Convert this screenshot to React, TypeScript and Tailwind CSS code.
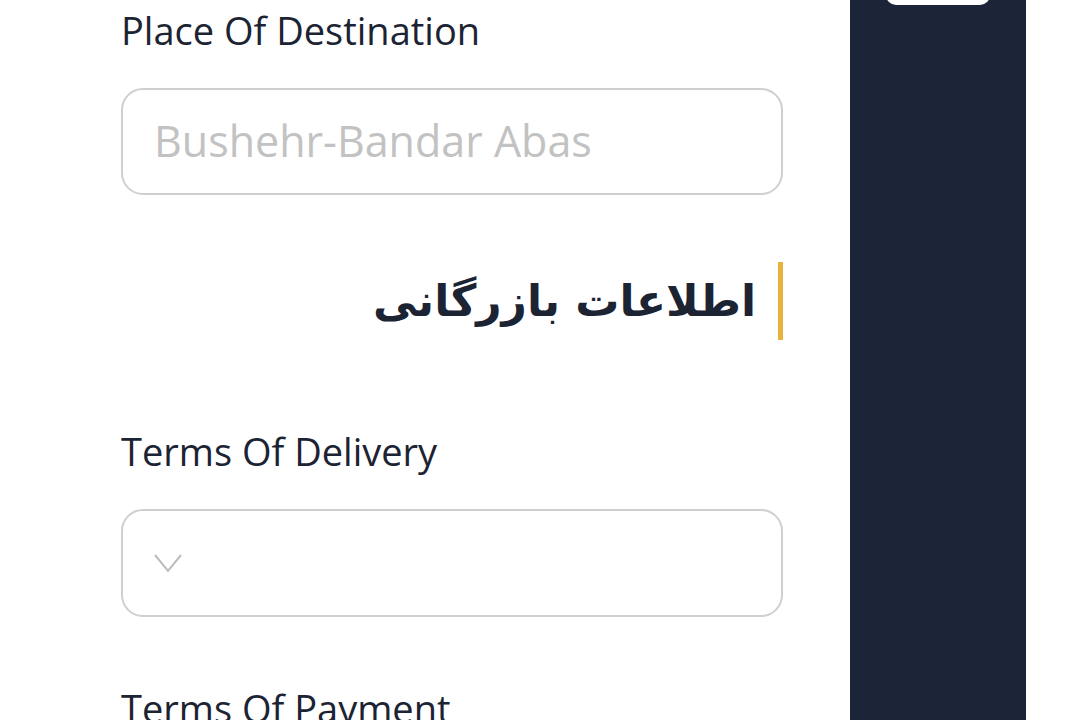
import React from "react";

export default function App() {
  return (
    <div className="flex h-[720px] w-[1080px] overflow-hidden bg-white" style={{ fontFamily: '"Open Sans", "Noto Sans", sans-serif' }}>
      <div className="w-[850px] shrink-0 pl-[121px]">
        <div className="w-[662px]">
          <div className="mt-[4px] text-[38px] leading-[52px] text-[#1c2333]">Place Of Destination</div>
          <div className="mt-[32px] flex h-[107px] items-center rounded-[22px] border-2 border-[#cfcfcf] px-[31px] text-[43px] text-[#c2c2c2]">
            Bushehr-Bandar Abas
          </div>
          <div className="mt-[67px] flex h-[78px] items-center justify-end">
            <div
              dir="rtl"
              className="border-r-[5px] border-[#e8b33a] pr-[22px] text-[44px] font-bold leading-[78px] text-[#1c2333]"
              style={{ fontFamily: '"DejaVu Sans", sans-serif' }}
            >
              اطلاعات بازرگانی
            </div>
          </div>
          <div className="mt-[85px] text-[38px] leading-[52px] text-[#1c2333]">Terms Of Delivery</div>
          <div className="mt-[32px] flex h-[108px] items-center rounded-[22px] border-2 border-[#cfcfcf] px-[30px]">
            <svg width="30" height="24" viewBox="0 0 30 24" fill="none" stroke="#bdbdbd" strokeWidth="2">
              <path d="M2 4 L15 20 L28 4" />
            </svg>
          </div>
          <div className="mt-[65px] text-[38px] leading-[52px] text-[#1c2333]">Terms Of Payment</div>
        </div>
      </div>
      <div className="relative w-[176px] shrink-0 bg-[#1c2538]">
        <div className="absolute left-[36px] top-[-20px] h-[25px] w-[104px] rounded-[10px] bg-white" />
      </div>
      <div className="flex-1 bg-white" />
    </div>
  );
}
